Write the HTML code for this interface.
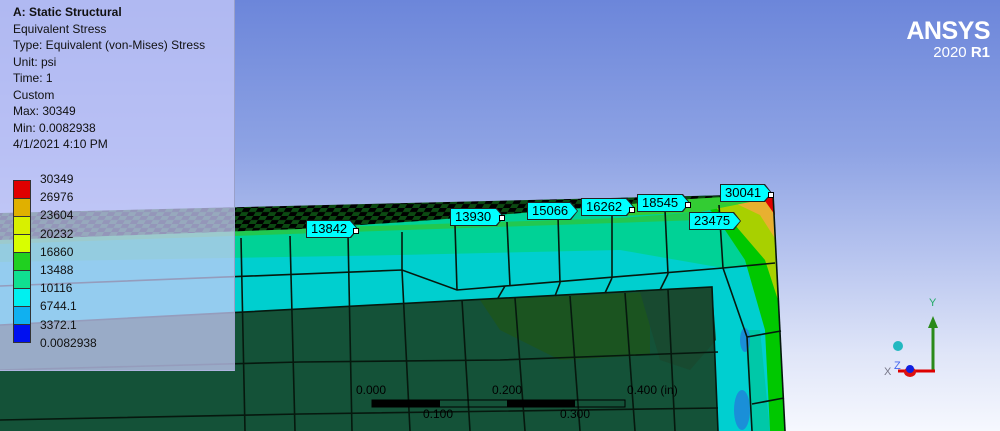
<!DOCTYPE html>
<html><head><meta charset="utf-8"><style>
html,body{margin:0;padding:0;width:1000px;height:431px;overflow:hidden}
body{background:linear-gradient(to bottom,#6c86da 0%,#8ea3e4 35%,#b8c5ef 60%,#dfe5f8 82%,#f6f8fe 100%);font-family:"Liberation Sans",sans-serif;position:relative}
svg{position:absolute;left:0;top:0}
.panel{position:absolute;left:0;top:0;width:234px;height:370px;background:rgba(200,202,250,0.74);border-right:1px solid #9aa0c8;border-bottom:1px solid #b0b4e0}
.t{position:absolute;left:13px;font-size:12px;color:#111;line-height:16.5px;top:4px}
.leg{position:absolute;left:13px;top:180px;width:18px}
.leg div{height:17px;border:1px solid #333;margin-bottom:-1px}
.lv{position:absolute;left:40px;font-size:12px;color:#111}
.ansys{position:absolute;right:10px;top:18px;color:#fff;text-align:right}
.lab{position:absolute;height:18px;background:#222;clip-path:polygon(0 0,calc(100% - 7px) 0,100% 50%,calc(100% - 7px) 100%,0 100%)}
.lab span{position:absolute;left:1px;top:1px;right:1px;bottom:1px;background:#00ffff;clip-path:polygon(0 0,calc(100% - 7px) 0,100% 50%,calc(100% - 7px) 100%,0 100%);font-size:13px;line-height:16px;padding-left:4px;color:#000}
.pt{position:absolute;width:4px;height:4px;background:#fff;border:1px solid #000}
</style></head><body>
<svg width="1000" height="431" viewBox="0 0 1000 431">
<defs>
<pattern id="chk" width="14" height="8" patternUnits="userSpaceOnUse" patternTransform="skewX(-30)">
<rect width="14" height="8" fill="#0c4a12"/><rect width="7" height="4" fill="#000"/><rect x="7" y="4" width="7" height="4" fill="#000"/>
</pattern>
</defs>
<polygon points="0,214 773,194 785,431 0,431" fill="#00cfcf"/>
<polygon points="0,214 773,194 775,262 723,268 620,250 400,255 0,262" fill="#00d296"/>
<polygon points="700,200 773,194 785,431 770,431 765,330 745,260 715,215" fill="#00c800"/>
<polygon points="705,198 773,194 778,300 765,260 735,225" fill="#a8d000"/>
<polygon points="720,196 773,194 776,240 760,215" fill="#e8b030"/>
<polygon points="760,194 773,194 775,215" fill="#e00000"/>
<polygon points="620,200 773,194 760,200 700,212 620,216" fill="#33cc33"/>
<polygon points="712,287 723,268 747,337 752,431 718,431" fill="#00cfd0"/>
<polygon points="745,330 760,330 770,431 752,431" fill="#00c8a8"/>
<ellipse cx="745" cy="340" rx="5" ry="12" fill="#1a8fd8"/>
<ellipse cx="742" cy="410" rx="8" ry="20" fill="#1a8fd8"/>
<polygon points="0,325 712,287 718,431 0,431" fill="#145238"/>
<polygon points="480,300 650,292 650,355 560,360 500,330" fill="#1b5420"/>
<polygon points="640,292 712,287 716,340 690,370 660,360" fill="#184a30"/>
<polygon points="0,238 620,218 700,212 700,220 0,244" fill="#22c850"/>
<polygon points="0,213 773,194 690,199 560,210 420,221 300,229 0,240" fill="url(#chk)"/>
<g stroke="#06180e" stroke-width="1.6" fill="none">
<polyline points="0,286 402,270 457,290 723,268 775,263"/>
<polyline points="0,325 712,287 718,431"/>
<polyline points="723,268 747,337 752,431"/>
<line x1="747" y1="337" x2="781" y2="331"/>
<line x1="752" y1="404" x2="784" y2="398"/>
<polyline points="0,370 300,362 500,360 718,352"/>
<polyline points="0,420 300,414 718,408"/>
<line x1="241" y1="238" x2="245" y2="431"/>
<line x1="290" y1="236" x2="295" y2="431"/>
<line x1="348" y1="234" x2="352" y2="431"/>
<line x1="402" y1="232" x2="402" y2="270"/>
<line x1="402" y1="270" x2="410" y2="431"/>
<line x1="455" y1="225" x2="457" y2="290"/>
<line x1="462" y1="300" x2="470" y2="431"/>
<line x1="507" y1="222" x2="510" y2="286"/>
<line x1="505" y1="286" x2="498" y2="298"/>
<line x1="515" y1="298" x2="525" y2="431"/>
<line x1="558" y1="216" x2="560" y2="283"/>
<line x1="560" y1="283" x2="555" y2="296"/>
<line x1="570" y1="296" x2="580" y2="431"/>
<line x1="612" y1="212" x2="612" y2="278"/>
<line x1="612" y1="278" x2="605" y2="293"/>
<line x1="625" y1="293" x2="635" y2="431"/>
<line x1="665" y1="210" x2="668" y2="274"/>
<line x1="668" y1="274" x2="660" y2="290"/>
<line x1="668" y1="290" x2="675" y2="431"/>
<line x1="719" y1="205" x2="723" y2="268"/>
<line x1="773" y1="194" x2="785" y2="431"/>
</g>
<rect x="372" y="400" width="253" height="7" fill="none" stroke="#000" stroke-width="1"/>
<rect x="372" y="400" width="68" height="7" fill="#000"/>
<rect x="507" y="400" width="68" height="7" fill="#000"/>
<g font-family="Liberation Sans" font-size="12" fill="#000">
<text x="356" y="394">0.000</text><text x="492" y="394">0.200</text><text x="627" y="394">0.400 (in)</text>
<text x="423" y="418">0.100</text><text x="560" y="418">0.300</text>
</g>
<line x1="933" y1="372" x2="933" y2="324" stroke="#2a8a1a" stroke-width="3"/>
<polygon points="928,328 933,316 938,328" fill="#2a8a1a"/>
<text x="929" y="306" font-size="11" fill="#22aa66" font-family="Liberation Sans">Y</text>
<line x1="898" y1="371" x2="935" y2="371" stroke="#dd0000" stroke-width="3"/>
<ellipse cx="910" cy="372" rx="6" ry="5" fill="#dd1111"/>
<circle cx="910" cy="369" r="4" fill="#1020e0"/>
<circle cx="898" cy="346" r="5" fill="#22b8c0"/>
<text x="884" y="375" font-size="11" fill="#778" font-family="Liberation Sans">X</text>
<text x="894" y="369" font-size="11" fill="#4466ee" font-family="Liberation Sans">Z</text>
</svg>
<div class="panel"></div>
<div class="t"><b>A: Static Structural</b><br>Equivalent Stress<br>Type: Equivalent (von-Mises) Stress<br>Unit: psi<br>Time: 1<br>Custom<br>Max: 30349<br>Min: 0.0082938<br>4/1/2021 4:10 PM</div>
<div class="leg">
<div style="background:#e00000"></div><div style="background:#e0b000"></div><div style="background:#d8f000"></div><div style="background:#d8ff00"></div><div style="background:#20d020"></div><div style="background:#10e090"></div><div style="background:#00f0f0"></div><div style="background:#10b0f0"></div><div style="background:#0010f0"></div>
</div>
<div class="lv" style="top:172px">30349</div><div class="lv" style="top:190px">26976</div><div class="lv" style="top:208px">23604</div><div class="lv" style="top:227px">20232</div><div class="lv" style="top:245px">16860</div><div class="lv" style="top:263px">13488</div><div class="lv" style="top:281px">10116</div><div class="lv" style="top:299px">6744.1</div><div class="lv" style="top:318px">3372.1</div><div class="lv" style="top:336px">0.0082938</div>
<div class="ansys"><div style="font-size:25px;font-weight:bold;line-height:26px;letter-spacing:-0.5px">ANSYS</div><div style="font-size:15px;line-height:17px">2020 <b>R1</b></div></div>
<div class="lab" style="left:306px;top:220px;width:52px"><span>13842</span></div><div class="pt" style="left:353px;top:228px"></div>
<div class="lab" style="left:450px;top:208px;width:54px"><span>13930</span></div><div class="pt" style="left:499px;top:215px"></div>
<div class="lab" style="left:527px;top:202px;width:51px"><span>15066</span></div>
<div class="lab" style="left:581px;top:198px;width:53px"><span>16262</span></div><div class="pt" style="left:629px;top:207px"></div>
<div class="lab" style="left:637px;top:194px;width:53px"><span>18545</span></div><div class="pt" style="left:685px;top:202px"></div>
<div class="lab" style="left:689px;top:212px;width:52px"><span>23475</span></div>
<div class="lab" style="left:720px;top:184px;width:52px"><span>30041</span></div><div class="pt" style="left:768px;top:192px"></div>
</body></html>
